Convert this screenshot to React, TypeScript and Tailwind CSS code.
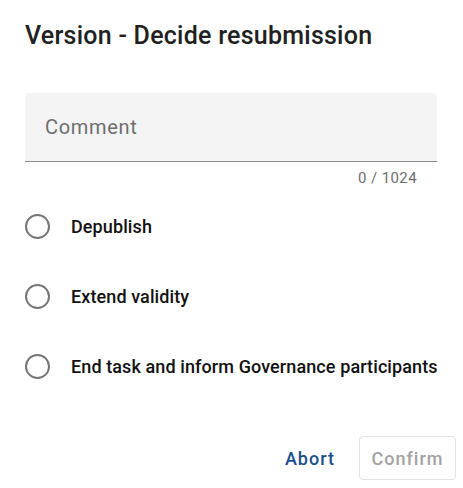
import { useState } from "react";

const OPTIONS = [
  { value: "depublish", label: "Depublish" },
  { value: "extend", label: "Extend validity" },
  { value: "end", label: "End task and inform Governance participants" },
];

export default function App() {
  const [comment, setComment] = useState("");
  const [choice, setChoice] = useState<string | null>(null);

  return (
    <div
      className="w-[463px] h-[488px] bg-white overflow-hidden"
      style={{ fontFamily: "Roboto, 'Liberation Sans', sans-serif" }}
    >
      <div className="pl-[25px] pr-[26px] pt-[20px]">
        <h2 className="text-[25px] leading-[32px] font-medium text-[#212121] tracking-[0.25px]">
          Version - Decide resubmission
        </h2>

        {/* Comment field */}
        <div className="mt-[41px]">
          <label className="block h-[69px] bg-[#f4f4f4] rounded-t-[4px] border-b border-[#8a8a8a] px-[20px]">
            <input
              value={comment}
              maxLength={1024}
              onChange={(e) => setComment(e.target.value)}
              placeholder="Comment"
              className="w-full h-full bg-transparent outline-none text-[20px] text-[#212121] placeholder:text-[#6e6e6e] tracking-[0.7px]"
            />
          </label>
          <div className="flex justify-end pr-[20px] pt-[6px] text-[15px] leading-[20px] text-[#6e6e6e] tracking-[0.4px]">
            {comment.length} / 1024
          </div>
        </div>

        {/* Decision options */}
        <div className="mt-[18px] flex flex-col gap-[30px]">
          {OPTIONS.map((opt) => (
            <label
              key={opt.value}
              className="flex items-center h-[40px] cursor-pointer whitespace-nowrap"
              onClick={() => setChoice(opt.value)}
            >
              <span className="shrink-0 w-[25px] h-[25px] rounded-full border-2 border-[#757575] flex items-center justify-center">
                {choice === opt.value && (
                  <span className="w-[12px] h-[12px] rounded-full bg-[#1a4f8b]" />
                )}
              </span>
              <span className="ml-[21px] text-[18px] font-medium text-[#111111] tracking-[0.1px]">
                {opt.label}
              </span>
            </label>
          ))}
        </div>
      </div>

      {/* Actions */}
      <div className="mt-[50px] flex justify-end items-center gap-[8px] pr-[7px]">
        <button className="h-[44px] px-[16px] text-[18px] font-medium tracking-[1px] text-[#1a4f8b] rounded">
          Abort
        </button>
        <button
          disabled={!choice}
          className="h-[44px] w-[97px] rounded-[4px] border border-[#e3e3e3] text-[18px] font-medium tracking-[1px] text-[#a3a3a3]"
        >
          Confirm
        </button>
      </div>
    </div>
  );
}
